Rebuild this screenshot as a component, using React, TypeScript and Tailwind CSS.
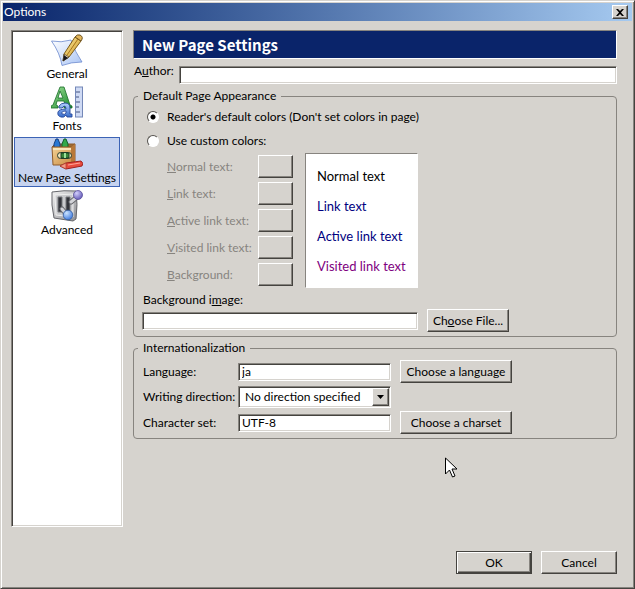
import React, { useState } from "react";

const raised =
  "border border-t-white border-l-white border-r-[#45433f] border-b-[#45433f] shadow-[inset_-1px_-1px_0_#87847f]";
const sunken =
  "border border-t-[#87847f] border-l-[#87847f] border-r-white border-b-white shadow-[inset_1px_1px_0_#45433f,inset_-1px_-1px_0_#d6d3ce]";

function GeneralIcon() {
  return (
    <svg width="32" height="32" viewBox="0 0 32 32" aria-hidden="true">
      <defs>
        <linearGradient id="paper" x1="0" y1="0" x2="1" y2="1">
          <stop offset="0" stopColor="#ffffff" />
          <stop offset="1" stopColor="#a9c4f5" />
        </linearGradient>
        <linearGradient id="pencil" x1="0" y1="0" x2="1" y2="1">
          <stop offset="0" stopColor="#fff0a0" />
          <stop offset="1" stopColor="#c98f1e" />
        </linearGradient>
      </defs>
      <path d="M0.500 7 Q10 9 20 6 Q24 18 31 28 Q20 28 11 31.500 Q9 19 0.500 7Z" fill="url(#paper)" stroke="#6a88cd" strokeWidth=".8" />
      <path d="M13 20 L24 3 L30 7 L18 23 L12 27Z" fill="url(#pencil)" stroke="#7b5a18" />
      <path d="M24 3 Q26 0 29 1 Q33 3 30 7Z" fill="#e3b65a" stroke="#6e5322" />
      <path d="M16 21 L27 5" stroke="#a8741a" />
      <path d="M13 20 L18 23 L12 27Z" fill="#f6e4c0" stroke="#453720" strokeWidth=".7" />
      <path d="M13 21 L17 24 L12 27Z" fill="#15151d" />
    </svg>
  );
}

function FontsIcon() {
  return (
    <svg width="32" height="32" viewBox="0 0 32 32" aria-hidden="true">
      <defs>
        <linearGradient id="green" x1="0" y1="0" x2="1" y2="1">
          <stop offset="0" stopColor="#a5e49d" />
          <stop offset="1" stopColor="#148526" />
        </linearGradient>
        <linearGradient id="blueA" x1="0" y1="0" x2="0" y2="1">
          <stop offset="0" stopColor="#b3d0ff" />
          <stop offset="1" stopColor="#3469c9" />
        </linearGradient>
      </defs>
      <path
        fillRule="evenodd"
        d="M0 20 L2 19 L9 1 H13 L19 19 L21 20 V22 H13 V20 L14 19 L13 15 H6 L5 19 L7 20 V22 H0Z M7 12 H12 L9 5Z"
        fill="url(#green)"
        stroke="#176d27"
        strokeWidth=".8"
      />
      <path
        fillRule="evenodd"
        d="M8 20 Q10 17 14 17 Q19 17 19 22 V28 H21 V31 H16 L15 29 Q13 32 10 31 Q6 30 7 26 Q8 23 15 23 Q15 20 13 20 L11 22 H8Z M15 25 Q10 25 11 28 Q14 29 15 27Z"
        fill="url(#blueA)"
        stroke="#26479b"
        strokeWidth=".9"
      />
      <rect x="24.500" y="1" width="7" height="30" fill="#cfdaf4" stroke="#7488b8" />
      <path d="M25 6h4M25 11h3M25 16h4M25 21h3M25 26h4" stroke="#455580" />
    </svg>
  );
}

function CrayonsIcon() {
  return (
    <svg width="32" height="32" viewBox="0 0 32 32" aria-hidden="true">
      <defs>
        <linearGradient id="box" x1="0" y1="0" x2="1" y2="1">
          <stop offset="0" stopColor="#f8d99d" />
          <stop offset="1" stopColor="#c5843b" />
        </linearGradient>
      </defs>
      <path d="M1 9 L4 6 H24 L20 9Z" fill="#9c6a34" stroke="#8e5b2b" />
      <path d="M3 11V6L5 1h2l2 5v5Z" fill="#2978d4" stroke="#163f7e" />
      <path d="M11 11V6l2-5h2l2 5v5Z" fill="#32a94b" stroke="#11602c" />
      <path d="M1 9 L20 9 L24 6 V23 L20 27 H2Z" fill="url(#box)" stroke="#8e5b2b" />
      <path d="M20 9 L24 6 V23 L20 27Z" fill="#b87839" />
      <path d="M2 10h18v2H2z" fill="#fae6ba" />
      <rect x="6.500" y="14.500" width="14" height="6" rx="3" fill="#f3e5bd" stroke="#263a2a" />
      <path d="M10 15h8v5h-8z" fill="#39863a" stroke="#1b3f23" />
      <path d="M13 15h2v5h-2z" fill="#9be09a" />
      <path d="M9 28 L15 25 L30 23 Q33 25 31 28 L15 31Z" fill="#e84b3e" stroke="#9f211e" />
      <path d="M9 28l6-3v6Z" fill="#f59a83" stroke="#a73b2c" strokeWidth=".7" />
      <path d="M17 27l12-2" stroke="#ffa597" />
    </svg>
  );
}

function AdvancedIcon() {
  return (
    <svg width="32" height="32" viewBox="0 0 32 32" aria-hidden="true">
      <defs>
        <linearGradient id="plate" x1="0" y1="0" x2="1" y2="1">
          <stop offset="0" stopColor="#f4f4f4" />
          <stop offset="1" stopColor="#8b8c91" />
        </linearGradient>
        <radialGradient id="violet" cx=".35" cy=".3" r=".7">
          <stop offset="0" stopColor="#d2cffc" />
          <stop offset="1" stopColor="#6a60bb" />
        </radialGradient>
        <radialGradient id="blueBall" cx=".35" cy=".3" r=".7">
          <stop offset="0" stopColor="#cbe4ff" />
          <stop offset="1" stopColor="#467fe0" />
        </radialGradient>
      </defs>
      <path d="M1 2 Q13 0 25 1 Q27 14 25 29 L22 31 L3 28 Q0 15 1 2Z" fill="url(#plate)" stroke="#66676c" />
      <path d="M4 5 L22 4 L22 27 L5 25Z" fill="#c9cacd" stroke="#efefef" />
      <path d="M7 7h4v15H7zM15 7h4v15h-4z" fill="#33343b" stroke="#77787c" />
      <path d="M11 19l5 6M20 12l6-5" stroke="#66676c" strokeWidth="5" strokeLinecap="round" />
      <path d="M11 19l5 6M20 12l6-5" stroke="#d2d3d8" strokeWidth="3" strokeLinecap="round" />
      <circle cx="27" cy="5" r="4.500" fill="url(#violet)" stroke="#5a519c" strokeWidth=".8" />
      <circle cx="17" cy="25" r="4.800" fill="url(#blueBall)" stroke="#315c9e" strokeWidth=".8" />
    </svg>
  );
}

const pages = [
  { name: "General", Icon: GeneralIcon },
  { name: "Fonts", Icon: FontsIcon },
  { name: "New Page Settings", Icon: CrayonsIcon },
  { name: "Advanced", Icon: AdvancedIcon },
];

const colors = [
  { id: "normal", key: "N", rest: "ormal text:" },
  { id: "link", key: "L", rest: "ink text:" },
  { id: "active", key: "A", rest: "ctive link text:" },
  { id: "visited", key: "V", rest: "isited link text:" },
  { id: "background", key: "B", rest: "ackground:" },
];

function PushButton({ className = "", children }: { className?: string; children: React.ReactNode }) {
  return (
    <button type="button" className={`h-[23px] shrink-0 bg-[#d6d3ce] text-center ${raised} ${className}`}>
      {children}
    </button>
  );
}

function TextBox({ id, value = "", className = "" }: { id: string; value?: string; className?: string }) {
  return (
    <input
      id={id}
      type="text"
      defaultValue={value}
      className={`h-[18px] min-w-0 bg-white px-[3px] outline-none ${sunken} ${className}`}
    />
  );
}

export default function App() {
  const [page, setPage] = useState("New Page Settings");
  const [mode, setMode] = useState("default");
  const radio =
    "size-3 shrink-0 appearance-none rounded-full border border-t-[#55524e] border-l-[#55524e] border-r-white border-b-white bg-white checked:bg-[radial-gradient(circle,#000_2px,#fff_3px)]";

  return (
    <div className="relative flex min-h-screen flex-col border border-t-[#d6d3ce] border-l-[#d6d3ce] border-r-[#45433f] border-b-[#45433f] bg-[#d6d3ce] font-['Lato','Liberation_Sans',sans-serif] text-[12px] leading-4 text-black shadow-[inset_1px_1px_0_#fff,inset_-1px_-1px_0_#87847f]">
      <header className="mx-0.5 mt-0.5 flex h-[18px] items-center justify-between bg-linear-to-r from-[#0a246a] to-[#a6caf0] pr-1 pl-px text-white">
        <h1>Options</h1>
        <button type="button" aria-label="Close" className={`grid h-3.5 w-4 place-items-center bg-[#d6d3ce] ${raised}`}>
          <svg width="8" height="7" viewBox="0 0 8 7" aria-hidden="true">
            <path d="M0 0h2l2 2 2-2h2L5 3.500 8 7H6L4 5 2 7H0l3-3.500Z" fill="#000" />
          </svg>
        </button>
      </header>

      <div className="flex grow items-start pt-[9px] pr-[17px] pl-2.5">
        <nav className={`h-[497px] w-28 shrink-0 bg-white px-0.5 pt-0.5 ${sunken}`}>
          {pages.map(({ name, Icon }) => (
            <button
              key={name}
              type="button"
              onClick={() => setPage(name)}
              className={`mb-0.5 flex h-[50px] w-full flex-col items-center border whitespace-nowrap ${
                page === name ? "border-[#3c63b5] bg-[#c6d3ef]" : "border-transparent"
              }`}
            >
              <Icon />
              <span>{name}</span>
            </button>
          ))}
        </nav>

        <main className="ml-2.5 flex min-w-0 grow flex-col">
          <h2 className="flex h-[29px] items-center border border-t-[#87847f] border-l-[#87847f] border-r-white border-b-white bg-[#0a246a] pl-2 font-['Noto_Sans_CJK_JP',sans-serif] text-[15px] font-bold text-white">
            New Page Settings
          </h2>
          <div className="mt-1 flex items-start">
            <label htmlFor="author" className="w-[46px] pl-px">
              A<u>u</u>thor:
            </label>
            <TextBox id="author" className="mt-[3px] grow" />
          </div>

          <fieldset className="mt-1 min-w-0 rounded-[4px] border border-[#87847f] px-2 pb-1">
            <legend className="-ml-1 px-[5px]">Default Page Appearance</legend>
            <div className="mt-[5px] flex items-center gap-2 pl-[5px]">
              <input
                id="reader"
                name="mode"
                type="radio"
                checked={mode === "default"}
                onChange={() => setMode("default")}
                className={radio}
              />
              <label htmlFor="reader">Reader's default colors (Don't set colors in page)</label>
            </div>
            <div className="mt-2 flex items-center gap-2 pl-[5px]">
              <input
                id="custom"
                name="mode"
                type="radio"
                checked={mode === "custom"}
                onChange={() => setMode("custom")}
                className={radio}
              />
              <label htmlFor="custom">Use custom colors:</label>
            </div>
            <div className="mt-1 flex items-start pl-[25px]">
              <div className="mt-0.5 flex flex-col gap-1">
                {colors.map(({ id, key, rest }) => (
                  <div key={id} className="flex items-center">
                    <label htmlFor={id} className="w-[91px] whitespace-nowrap text-[#87847f]">
                      <u>{key}</u>
                      {rest}
                    </label>
                    <button id={id} type="button" disabled className={`h-[23px] w-[35px] bg-[#d6d3ce] ${raised}`} />
                  </div>
                ))}
              </div>
              <div className="ml-3 flex h-[135px] w-[113px] flex-col gap-3.5 border border-t-[#87847f] border-l-[#87847f] border-r-white border-b-white bg-white pt-3.5 pl-[11px] text-[13px] whitespace-nowrap">
                <p>Normal text</p>
                <p className="text-[#000080]">Link text</p>
                <p className="text-[#000080]">Active link text</p>
                <p className="text-[#800080]">Visited link text</p>
              </div>
            </div>
            <div className="mt-1 flex items-end gap-[9px]">
              <div className="flex w-[276px] flex-col">
                <label htmlFor="image" className="mb-1 pl-px">
                  Background i<u>m</u>age:
                </label>
                <TextBox id="image" className="mb-0.5 w-full" />
              </div>
              <PushButton className="w-[82px]">
                Ch<u>o</u>ose File...
              </PushButton>
            </div>
          </fieldset>

          <fieldset className="mt-[3px] min-w-0 rounded-[4px] border border-[#87847f] px-[9px] pb-1">
            <legend className="-ml-[5px] px-[5px]">Internationalization</legend>
            <div className="mt-1 grid grid-cols-[86px_153px_112px] items-center gap-x-[9px] gap-y-[3px]">
              <label htmlFor="language" className="whitespace-nowrap">
                Language:
              </label>
              <TextBox id="language" value="ja" />
              <PushButton>Choose a language</PushButton>
              <label htmlFor="direction" className="whitespace-nowrap">
                Writing direction:
              </label>
              <div className={`relative col-span-2 h-[22px] w-[153px] bg-white ${sunken}`}>
                <select
                  id="direction"
                  defaultValue="none"
                  className="h-full w-full appearance-none bg-transparent pr-5 pl-1.5 outline-none"
                >
                  <option value="none">No direction specified</option>
                  <option value="ltr">Left to right</option>
                  <option value="rtl">Right to left</option>
                </select>
                <span
                  className={`pointer-events-none absolute top-px right-px grid h-[18px] w-[17px] place-items-center bg-[#d6d3ce] ${raised}`}
                >
                  <svg width="7" height="4" viewBox="0 0 7 4" aria-hidden="true">
                    <path d="M0 0h7L3.500 4Z" fill="#000" />
                  </svg>
                </span>
              </div>
              <label htmlFor="charset" className="whitespace-nowrap">
                Character set:
              </label>
              <TextBox id="charset" value="UTF-8" />
              <PushButton>Choose a charset</PushButton>
            </div>
          </fieldset>
        </main>
      </div>

      <footer className="flex justify-end gap-[9px] pr-[17px] pb-3.5">
        <button
          type="submit"
          className="h-[23px] w-[76px] border border-[#45433f] bg-[#d6d3ce] shadow-[inset_1px_1px_0_#fff,inset_-1px_-1px_0_#45433f,inset_-2px_-2px_0_#87847f]"
        >
          OK
        </button>
        <PushButton className="w-[76px]">Cancel</PushButton>
      </footer>

      <svg className="pointer-events-none absolute top-[456px] left-[444px]" width="13" height="22" viewBox="0 0 13 22" aria-hidden="true">
        <path
          d="M.500 1v16l4-4 3 7 2.500-1-3-7H12Z"
          fill="#fff"
          stroke="#000"
        />
      </svg>
    </div>
  );
}
